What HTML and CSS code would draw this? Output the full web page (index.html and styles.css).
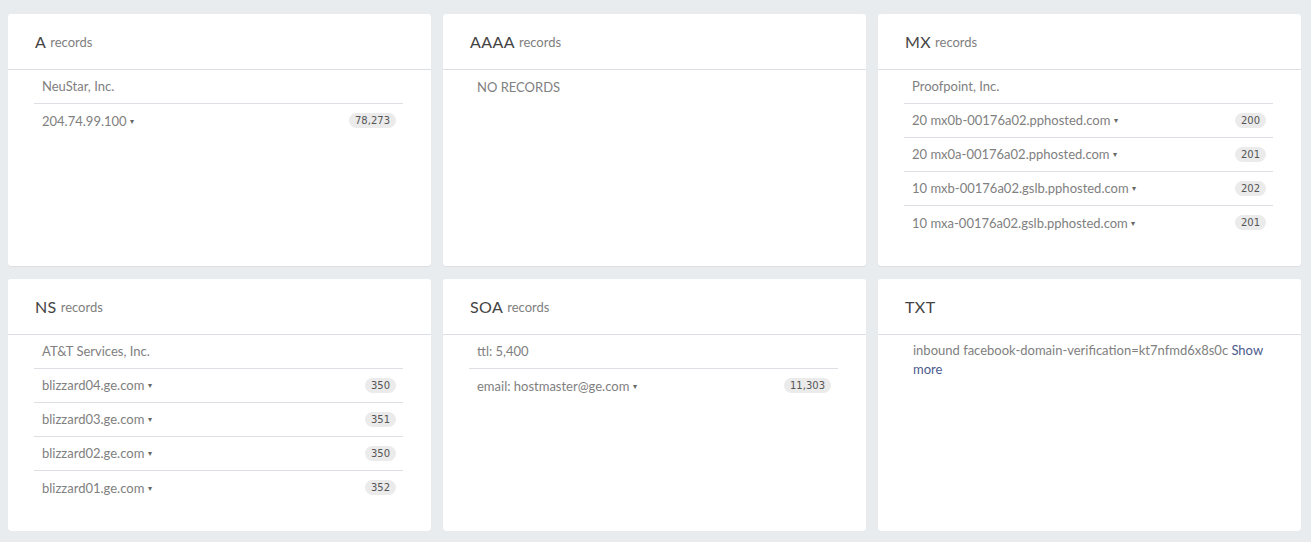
FILE: index.html
```html
<!DOCTYPE html>
<html>
<head>
    <title>DNS records</title>
    <link rel="stylesheet" href="styles.css">
</head>
<body>
    <div class="grid">
        <div class="card">
            <div class="card-head"><span class="rtype">A</span> <span class="rsub">records</span></div>
            <ul class="rlist">
                <li class="org">NeuStar, Inc.</li>
                <li><span>204.74.99.100 <i class="caret">&#9662;</i></span><span class="badge">78,273</span></li>
            </ul>
        </div>
        <div class="card">
            <div class="card-head"><span class="rtype">AAAA</span> <span class="rsub">records</span></div>
            <ul class="rlist">
                <li class="org">NO RECORDS</li>
            </ul>
        </div>
        <div class="card">
            <div class="card-head"><span class="rtype">MX</span> <span class="rsub">records</span></div>
            <ul class="rlist">
                <li class="org">Proofpoint, Inc.</li>
                <li><span>20 mx0b-00176a02.pphosted.com <i class="caret">&#9662;</i></span><span class="badge">200</span></li>
                <li><span>20 mx0a-00176a02.pphosted.com <i class="caret">&#9662;</i></span><span class="badge">201</span></li>
                <li><span>10 mxb-00176a02.gslb.pphosted.com <i class="caret">&#9662;</i></span><span class="badge">202</span></li>
                <li><span>10 mxa-00176a02.gslb.pphosted.com <i class="caret">&#9662;</i></span><span class="badge">201</span></li>
            </ul>
        </div>
        <div class="card">
            <div class="card-head"><span class="rtype">NS</span> <span class="rsub">records</span></div>
            <ul class="rlist">
                <li class="org">AT&amp;T Services, Inc.</li>
                <li><span>blizzard04.ge.com <i class="caret">&#9662;</i></span><span class="badge">350</span></li>
                <li><span>blizzard03.ge.com <i class="caret">&#9662;</i></span><span class="badge">351</span></li>
                <li><span>blizzard02.ge.com <i class="caret">&#9662;</i></span><span class="badge">350</span></li>
                <li><span>blizzard01.ge.com <i class="caret">&#9662;</i></span><span class="badge">352</span></li>
            </ul>
        </div>
        <div class="card">
            <div class="card-head"><span class="rtype">SOA</span> <span class="rsub">records</span></div>
            <ul class="rlist">
                <li class="org">ttl: 5,400</li>
                <li><span>email: hostmaster@ge.com <i class="caret">&#9662;</i></span><span class="badge">11,303</span></li>
            </ul>
        </div>
        <div class="card">
            <div class="card-head"><span class="rtype">TXT</span></div>
            <p class="txt">inbound facebook-domain-verification=kt7nfmd6x8s0c <a href="#">Show more</a></p>
        </div>
    </div>
</body>
</html>
```

FILE: styles.css
```css
body { margin:0; background:#e9ecef; font-family: Lato, "Noto Sans", sans-serif; color:#808080; }
.grid {
    display: grid;
    grid-template-columns: repeat(3, 423px);
    column-gap: 12px;
    row-gap: 13px;
    padding: 14px 10px 0 8px;
}
.card {
    background: #fff;
    border-radius: 3px;
    height: 252px;
    box-shadow: 0 1px 1px rgba(0,0,0,.06);
}
.card-head {
    height: 56px;
    box-sizing: border-box;
    padding: 0 27px 1px;
    display: flex;
    align-items: center;
    gap: 4px;
    border-bottom: 1px solid #dcdfe3;
}
.rtype { font-size:16px; color:#444; letter-spacing:.4px; }
.rsub { font-size:13px; color:#808080; padding-top:2px; }

.rlist { list-style:none; margin:0 28px 0 26px; padding:0; }
.rlist li {
    height: 34px;
    box-sizing: border-box;
    padding: 0 7px 1px 8px;
    display: flex;
    align-items: center;
    justify-content: space-between;
    font-size: 13px;
    border-bottom: 1px solid #dcdfe3;
}
.rlist li:last-child { border-bottom: 0; }
.caret { font-style:normal; font-size:8px; color:#666; vertical-align:2px; }
.badge {
    background: #ebebeb;
    color: #555;
    font-family: "DejaVu Sans", sans-serif;
    font-size: 10px;
    line-height: 15px;
    padding: 0 6px;
    border-radius: 8px;
}
.txt {
    margin: 6px 36px 0 35px;
    font-size: 13px;
    line-height: 19px;
}
.txt a { color:#4b5a8c; text-decoration:none; }
```
